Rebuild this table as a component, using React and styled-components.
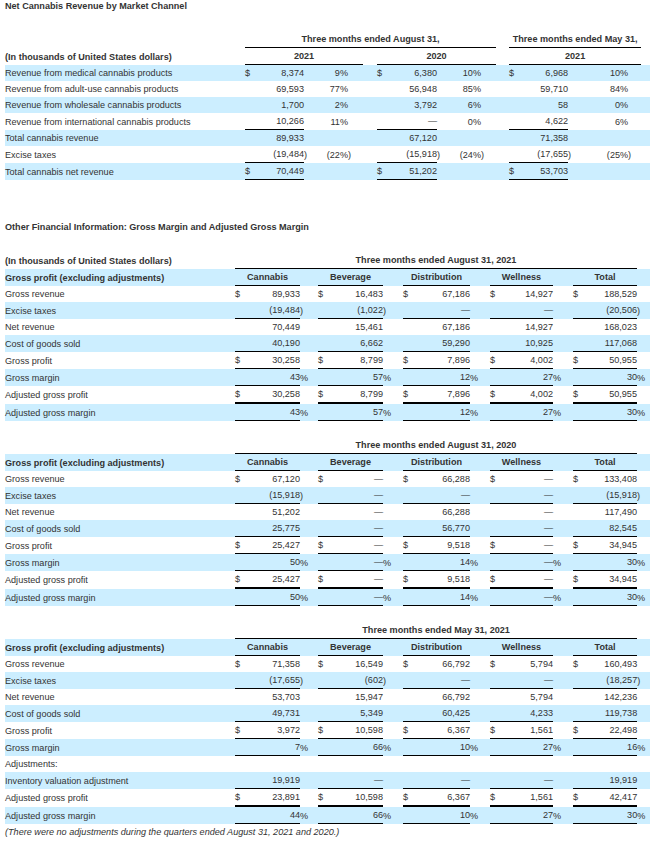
import React from "react";
import styled, { createGlobalStyle } from "styled-components";

/**
 * global page reset
 */
const GlobalStyle = createGlobalStyle`
  body {
    margin: 0;
    background: #fff;
  }
`;

const SHADE = "#cceeff";

/**
 * data
 */
const channelRows = [
  { label: "Revenue from medical cannabis products", groups: [["$", "8,374", "9%"], ["$", "6,380", "10%"], ["$", "6,968", "10%"]] },
  { label: "Revenue from adult-use cannabis products", groups: [["", "69,593", "77%"], ["", "56,948", "85%"], ["", "59,710", "84%"]] },
  { label: "Revenue from wholesale cannabis products", groups: [["", "1,700", "2%"], ["", "3,792", "6%"], ["", "58", "0%"]] },
  { label: "Revenue from international cannabis products", rule: 1, groups: [["", "10,266", "11%"], ["", "—", "0%"], ["", "4,622", "6%"]] },
  { label: "Total cannabis revenue", groups: [["", "89,933", ""], ["", "67,120", ""], ["", "71,358", ""]] },
  { label: "Excise taxes", rule: 1, groups: [["", "(19,484)", "(22%)"], ["", "(15,918)", "(24%)"], ["", "(17,655)", "(25%)"]] },
  { label: "Total cannabis net revenue", rule: 1, groups: [["$", "70,449", ""], ["$", "51,202", ""], ["$", "53,703", ""]] },
];

const segments = ["Cannabis", "Beverage", "Distribution", "Wellness", "Total"];

const marginTables = [
  {
    period: "Three months ended August 31, 2021",
    units: true,
    rows: [
      { label: "Gross revenue", cur: true, values: ["89,933", "16,483", "67,186", "14,927", "188,529"] },
      { label: "Excise taxes", rule: 1, values: ["(19,484)", "(1,022)", "—", "—", "(20,506)"] },
      { label: "Net revenue", values: ["70,449", "15,461", "67,186", "14,927", "168,023"] },
      { label: "Cost of goods sold", rule: 1, values: ["40,190", "6,662", "59,290", "10,925", "117,068"] },
      { label: "Gross profit", cur: true, rule: 1, values: ["30,258", "8,799", "7,896", "4,002", "50,955"] },
      { label: "Gross margin", rule: 1, values: ["43%", "57%", "12%", "27%", "30%"] },
      { label: "Adjusted gross profit", cur: true, rule: 2, values: ["30,258", "8,799", "7,896", "4,002", "50,955"] },
      { label: "Adjusted gross margin", rule: 1, values: ["43%", "57%", "12%", "27%", "30%"] },
    ],
  },
  {
    period: "Three months ended August 31, 2020",
    rows: [
      { label: "Gross revenue", cur: true, values: ["67,120", "—", "66,288", "—", "133,408"] },
      { label: "Excise taxes", rule: 1, values: ["(15,918)", "—", "—", "—", "(15,918)"] },
      { label: "Net revenue", values: ["51,202", "—", "66,288", "—", "117,490"] },
      { label: "Cost of goods sold", rule: 1, values: ["25,775", "—", "56,770", "—", "82,545"] },
      { label: "Gross profit", cur: true, rule: 1, values: ["25,427", "—", "9,518", "—", "34,945"] },
      { label: "Gross margin", rule: 1, values: ["50%", "—%", "14%", "—%", "30%"] },
      { label: "Adjusted gross profit", cur: true, rule: 2, values: ["25,427", "—", "9,518", "—", "34,945"] },
      { label: "Adjusted gross margin", rule: 1, values: ["50%", "—%", "14%", "—%", "30%"] },
    ],
  },
  {
    period: "Three months ended May 31, 2021",
    rows: [
      { label: "Gross revenue", cur: true, values: ["71,358", "16,549", "66,792", "5,794", "160,493"] },
      { label: "Excise taxes", rule: 1, values: ["(17,655)", "(602)", "—", "—", "(18,257)"] },
      { label: "Net revenue", values: ["53,703", "15,947", "66,792", "5,794", "142,236"] },
      { label: "Cost of goods sold", rule: 1, values: ["49,731", "5,349", "60,425", "4,233", "119,738"] },
      { label: "Gross profit", cur: true, rule: 1, values: ["3,972", "10,598", "6,367", "1,561", "22,498"] },
      { label: "Gross margin", rule: 1, values: ["7%", "66%", "10%", "27%", "16%"] },
      { label: "Adjustments:", values: ["", "", "", "", ""] },
      { label: "Inventory valuation adjustment", rule: 1, values: ["19,919", "—", "—", "—", "19,919"] },
      { label: "Adjusted gross profit", cur: true, rule: 2, values: ["23,891", "10,598", "6,367", "1,561", "42,417"] },
      { label: "Adjusted gross margin", rule: 1, values: ["44%", "66%", "10%", "27%", "30%"] },
    ],
  },
];

// column widths, px (label, then $ / value / hang / spacer per group)
const channelCols = [240, 12, 47, 6, 38, 15, 14, 12, 48, 6, 38, 15, 13, 12, 47, 6, 54, 13, 9];
const segmentCols = [230, 12, 53, 8, 10, 12, 53, 8, 12, 12, 55, 8, 12, 12, 51, 8, 12, 12, 52, 8, 5];

/**
 * split "(1,234)" -> ["(1,234", ")"], "43%" -> ["43", "%"]
 */
const splitHang = (text, hangPercent) => {
  if (text.endsWith(")")) return [text.slice(0, -1), ")"];
  if (hangPercent && text.endsWith("%")) return [text.slice(0, -1), "%"];
  return [text, ""];
};

/**
 * components
 */
const ChannelTable = () => (
  <Table>
    <colgroup>
      {channelCols.map((w, i) => (
        <col key={i} style={{ width: w }} />
      ))}
    </colgroup>
    <tbody>
      <Row>
        <Cell />
        <HeadCell colSpan={11} $rule={1}>Three months ended August 31,</HeadCell>
        <Cell />
        <HeadCell colSpan={5} $rule={1}>Three months ended May 31,</HeadCell>
        <Cell />
      </Row>
      <Row>
        <Cell $bold>(In thousands of United States dollars)</Cell>
        <HeadCell colSpan={5} $rule={1}>2021</HeadCell>
        <Cell />
        <HeadCell colSpan={5} $rule={1}>2020</HeadCell>
        <Cell />
        <HeadCell colSpan={5} $rule={1}>2021</HeadCell>
        <Cell />
      </Row>
      {channelRows.map((row, r) => (
        <Row key={row.label} $shade={r % 2 === 0}>
          <Cell>{row.label}</Cell>
          {row.groups.map(([cur, value, pct], g) => {
            const [v, vHang] = splitHang(value);
            const [p, pHang] = splitHang(pct);
            return (
              <React.Fragment key={g}>
                <Cell $rule={row.rule}>{cur}</Cell>
                <Cell $align="right" $rule={row.rule}>{v}</Cell>
                <Cell>{vHang}</Cell>
                <Cell $align="right">{p}</Cell>
                <Cell>{pHang}</Cell>
                {g < 2 && <Cell />}
              </React.Fragment>
            );
          })}
          <Cell />
        </Row>
      ))}
    </tbody>
  </Table>
);

const MarginTable = ({ period, units, rows }) => (
  <Table>
    <colgroup>
      {segmentCols.map((w, i) => (
        <col key={i} style={{ width: w }} />
      ))}
    </colgroup>
    <tbody>
      <Row>
        <Cell $bold>{units ? "(In thousands of United States dollars)" : ""}</Cell>
        <HeadCell colSpan={18} $rule={1}>{period}</HeadCell>
        <Cell colSpan={2} />
      </Row>
      <Row $shade>
        <Cell $bold>Gross profit (excluding adjustments)</Cell>
        {segments.map((name, g) => (
          <React.Fragment key={name}>
            <HeadCell colSpan={2} $rule={1}>{name}</HeadCell>
            <Cell colSpan={g < 4 ? 2 : 1} />
          </React.Fragment>
        ))}
        <Cell />
      </Row>
      {rows.map((row, r) => (
        <Row key={row.label} $shade={r % 2 === 1}>
          <Cell>{row.label}</Cell>
          {row.values.map((value, g) => {
            const [v, hang] = splitHang(value, true);
            return (
              <React.Fragment key={g}>
                <Cell $rule={row.rule}>{row.cur ? "$" : ""}</Cell>
                <Cell $align="right" $rule={row.rule}>{v}</Cell>
                <Cell>{hang}</Cell>
                {g < 4 && <Cell />}
              </React.Fragment>
            );
          })}
          <Cell />
        </Row>
      ))}
    </tbody>
  </Table>
);

const App = () => (
  <>
    <GlobalStyle />
    <Page>
      <Title>Net Cannabis Revenue by Market Channel</Title>
      <ChannelTable />
      <Title $gap={41}>Other Financial Information: Gross Margin and Adjusted Gross Margin</Title>
      <Stack>
        {marginTables.map((t) => (
          <MarginTable key={t.period} {...t} />
        ))}
      </Stack>
      <Note>(There were no adjustments during the quarters ended August 31, 2021 and 2020.)</Note>
    </Page>
  </>
);

/**
 * styles
 */
const Page = styled.div`
  width: 645px;
  padding: 0 7px 8px 5px;
  font-family: "Liberation Sans", Arial, sans-serif;
  font-size: 9.1px;
  color: #333;
`;

const Title = styled.div`
  font-weight: bold;
  line-height: 12px;
  margin-top: ${(p) => p.$gap || 0}px;
  margin-bottom: 19px;
`;

const Stack = styled.div`
  display: flex;
  flex-direction: column;
  gap: 16px;
`;

const Table = styled.table`
  width: 645px;
  table-layout: fixed;
  border-collapse: separate;
  border-spacing: 0;
`;

const Row = styled.tr`
  background: ${(p) => (p.$shade ? SHADE : "transparent")};
`;

const Cell = styled.td`
  height: 16px;
  padding: 0;
  line-height: 16px;
  white-space: nowrap;
  overflow: visible;
  text-align: ${(p) => p.$align || "left"};
  font-weight: ${(p) => (p.$bold ? "bold" : "normal")};
  border-bottom: ${(p) => (p.$rule ? `${p.$rule}px solid #000` : "none")};
`;

const HeadCell = styled(Cell)`
  text-align: center;
  font-weight: bold;
`;

const Note = styled.div`
  font-style: italic;
  line-height: 16px;
`;

export default App;
